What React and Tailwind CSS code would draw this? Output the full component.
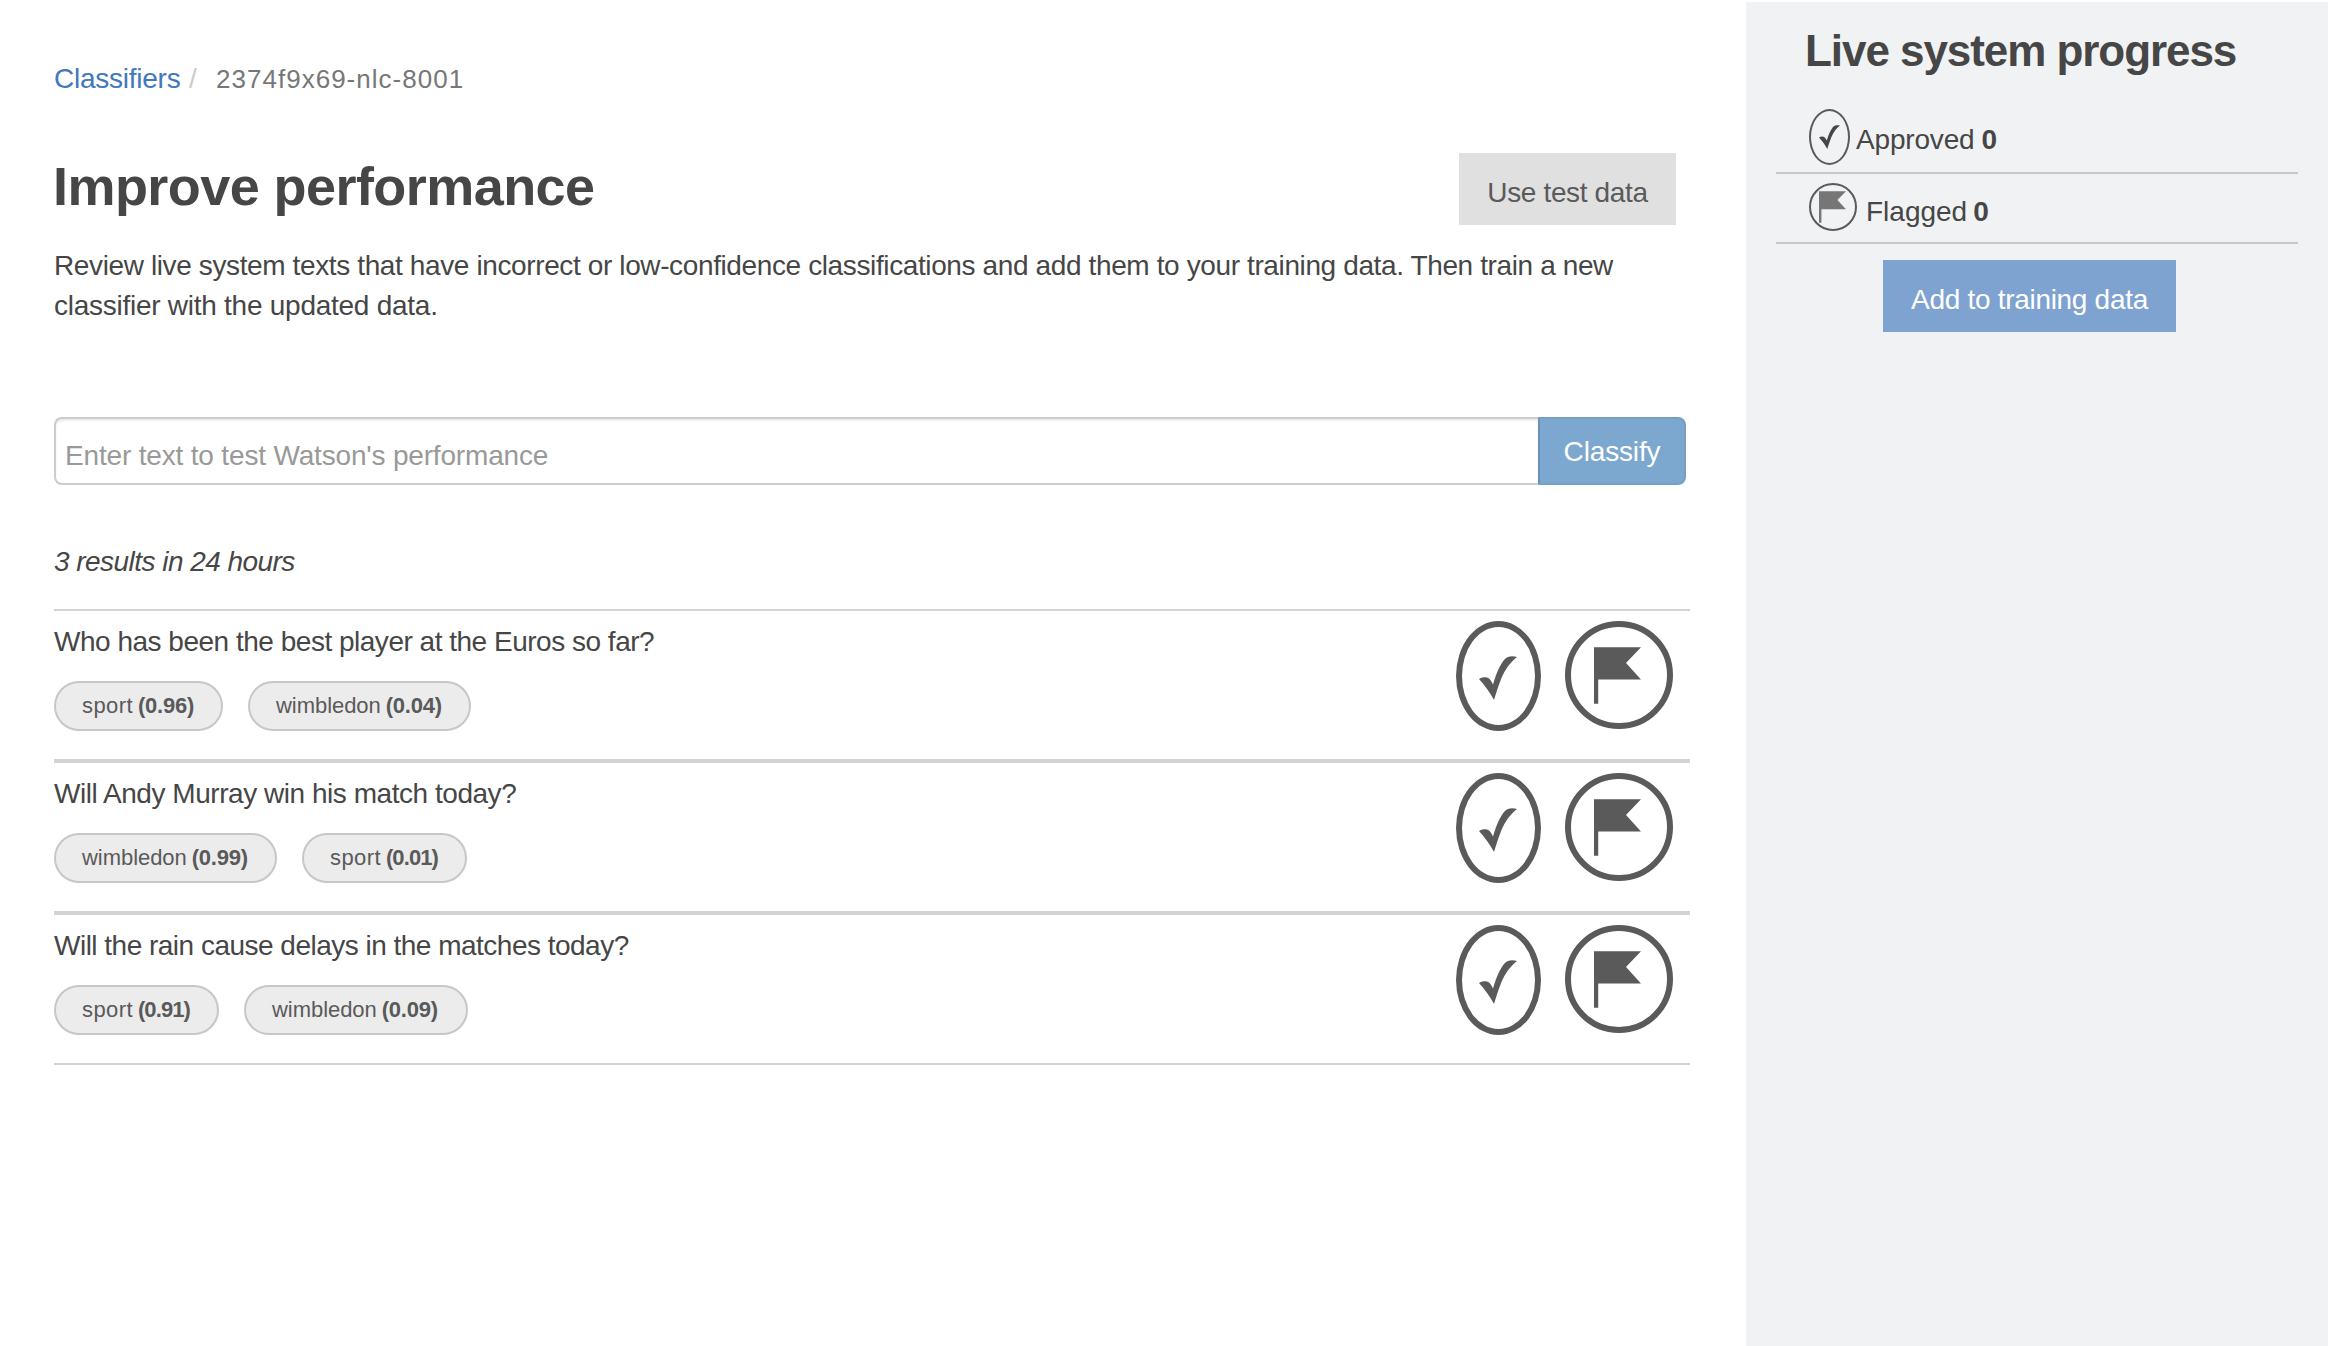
const results = [
  {
    text: 'Who has been the best player at the Euros so far?',
    spacing: 'tracking-[-0.49px]',
    classes: [
      { name: 'sport', score: '(0.96)', width: 'w-[169px]', tracking: 'tracking-[0.4px]', scoreTracking: 'tracking-[-0.23px]' },
      { name: 'wimbledon', score: '(0.04)', width: 'w-[223px]', tracking: 'tracking-[-0.05px]', scoreTracking: 'tracking-[-0.23px]' },
    ],
  },
  {
    text: 'Will Andy Murray win his match today?',
    spacing: 'tracking-[-0.46px]',
    classes: [
      { name: 'wimbledon', score: '(0.99)', width: 'w-[223px]', tracking: 'tracking-[-0.05px]', scoreTracking: 'tracking-[-0.23px]' },
      { name: 'sport', score: '(0.01)', width: 'w-[165px]', tracking: 'tracking-[0.4px]', scoreTracking: 'tracking-[-0.9px]' },
    ],
  },
  {
    text: 'Will the rain cause delays in the matches today?',
    spacing: 'tracking-[-0.51px]',
    classes: [
      { name: 'sport', score: '(0.91)', width: 'w-[165px]', tracking: 'tracking-[0.4px]', scoreTracking: 'tracking-[-0.9px]' },
      { name: 'wimbledon', score: '(0.09)', width: 'w-[224px]', tracking: 'tracking-[-0.05px]', scoreTracking: 'tracking-[-0.23px]' },
    ],
  },
];

function Check({ className }) {
  return (
    <svg viewBox="0 0 38 44" className={className} fill="currentColor" preserveAspectRatio="none">
      <path d="M0 23C3 20.8 7.5 20.6 10 22.6C11.8 24.2 12.8 26.2 14 28.6C16.5 19.5 20.5 9.5 25 4C28.5 0 33 -0.2 38 1C31.5 6 26 13.5 22.3 22.5C19.2 30.5 17 37.5 15 44C11 36.5 6 29.5 0 23Z" />
    </svg>
  );
}

function Flag({ className }) {
  return (
    <svg viewBox="0 0 47 57" className={className} fill="currentColor" preserveAspectRatio="none">
      <path d="M0 0.3H47L32 16L47 32.5H4.2V56.7H0Z" />
    </svg>
  );
}

function Pill({ name, score, width, tracking, scoreTracking }) {
  return (
    <span className={`flex h-[50px] ${width} items-center gap-[5px] rounded-full border-2 border-[#c7c7c7] bg-[#ececec] pl-[26px] text-[22px] leading-[30px] whitespace-nowrap text-[#5a5a5a]`}>
      <span className={tracking}>{name}</span>
      <b className={scoreTracking}>{score}</b>
    </span>
  );
}

function ResultRow({ text, spacing, classes }) {
  return (
    <li className="flex h-[152px] items-start justify-between border-y-2 border-[#d3d3d3] pr-[17px]">
      <div className="pt-[11px]">
        <p className={`leading-[40px] ${spacing}`}>{text}</p>
        <div className="mt-[19px] flex gap-[25px]">
          {classes.map((c) => <Pill key={c.name} {...c} />)}
        </div>
      </div>
      <div className="flex gap-6 pt-[10px] text-[#5a5a5a]">
        <button className="flex h-[110px] w-[85px] items-start rounded-[50%] border-6 border-[#5a5a5a] pt-[29px] pl-[17px]">
          <Check className="block h-[44px] w-[38px]" />
        </button>
        <button className="flex h-[108px] w-[108px] items-start rounded-full border-6 border-[#5a5a5a] pt-[20px] pl-[23px]">
          <Flag className="block h-[57px] w-[47px]" />
        </button>
      </div>
    </li>
  );
}

export default function App() {
  return (
    <div className="flex h-[1346px] w-[2328px] bg-white font-['Liberation_Sans',Arial,sans-serif] text-[28px] text-[#464646]">
      <main className="w-[1746px] shrink-0 pt-[59px] pl-[54px]">
        <nav className="flex h-10 items-center leading-[40px]">
          <a className="w-[135px] tracking-[-0.25px] text-[#4178be]">Classifiers</a>
          <span className="w-[27px] text-[#cccccc]">/</span>
          <span className="text-[26px] tracking-[1.02px] text-[#777777]">2374f9x69-nlc-8001</span>
        </nav>

        <header className="mt-[54px] flex h-[72px] w-[1622px] items-start justify-between">
          <h1 className="-ml-px pt-[3px] text-[54px] leading-[60px] font-bold tracking-[-0.56px]">Improve performance</h1>
          <button className="h-[72px] w-[217px] bg-[#e0e0e0] pt-[8px] tracking-[-0.36px] text-[#5a5a5a]">Use test data</button>
        </header>

        <p className="mt-[21px] leading-[40px] whitespace-nowrap">
          <span className="tracking-[-0.38px]">Review live system texts that have incorrect or low-confidence classifications and add them to your training data. Then train a new</span>
          <br />
          <span className="tracking-[-0.26px]">classifier with the updated data.</span>
        </p>

        <form className="mt-[91px] flex h-[68px] w-[1632px]">
          <div className="flex-1 rounded-l-lg border-2 border-r-0 border-[#cccccc] pt-[17px] pl-[9px] leading-[40px] tracking-[-0.17px] text-[#999999] shadow-[inset_0_2px_2px_rgba(0,0,0,0.075)]">
            Enter text to test Watson's performance
          </div>
          <button type="button" className="w-[148px] rounded-r-lg border-2 border-[#769fc2] border-l-[#6893b8] bg-[#7ca7ce] pt-[2px] tracking-[-0.14px] text-white">Classify</button>
        </form>

        <p className="mt-[57px] leading-[40px] tracking-[-0.54px] italic">3 results in 24 hours</p>

        <ul className="mt-[27px] w-[1636px]">
          {results.map((r) => <ResultRow key={r.text} {...r} />)}
        </ul>
      </main>

      <aside className="mt-[2px] flex-1 bg-[#f0f2f4] px-[30px]">
        <h2 className="ml-[29px] pt-[24px] text-[44px] leading-[50px] font-bold tracking-[-1.06px]">Live system progress</h2>
        <div className="flex h-[98px] items-start border-b-2 border-[#c7c7c7] pt-[33px] pl-[33px]">
          <span className="h-[56px] w-[41px] rounded-[50%] border-2 border-[#5a5a5a] pt-[14px] pl-[8px]">
            <Check className="block h-[24px] w-[21px]" />
          </span>
          <span className="mt-[11px] ml-[6px] leading-[40px] tracking-[-0.18px]">Approved</span>
          <b className="mt-[11px] ml-[7px] leading-[40px]">0</b>
        </div>
        <div className="flex h-[70px] items-start border-b-2 border-[#c7c7c7] pt-[9px] pl-[33px]">
          <span className="h-[48px] w-[48px] rounded-full border-2 border-[#5a5a5a] pt-[6px] pl-[8px] text-[#767676]">
            <Flag className="block h-[32px] w-[27px]" />
          </span>
          <span className="mt-[9px] ml-[9px] leading-[40px]">Flagged</span>
          <b className="mt-[9px] ml-[6px] leading-[40px]">0</b>
        </div>
        <button className="mt-4 ml-[107px] h-[72px] w-[293px] bg-[#7fa3d1] pt-[8px] tracking-[-0.3px] text-white">Add to training data</button>
      </aside>
    </div>
  );
}
